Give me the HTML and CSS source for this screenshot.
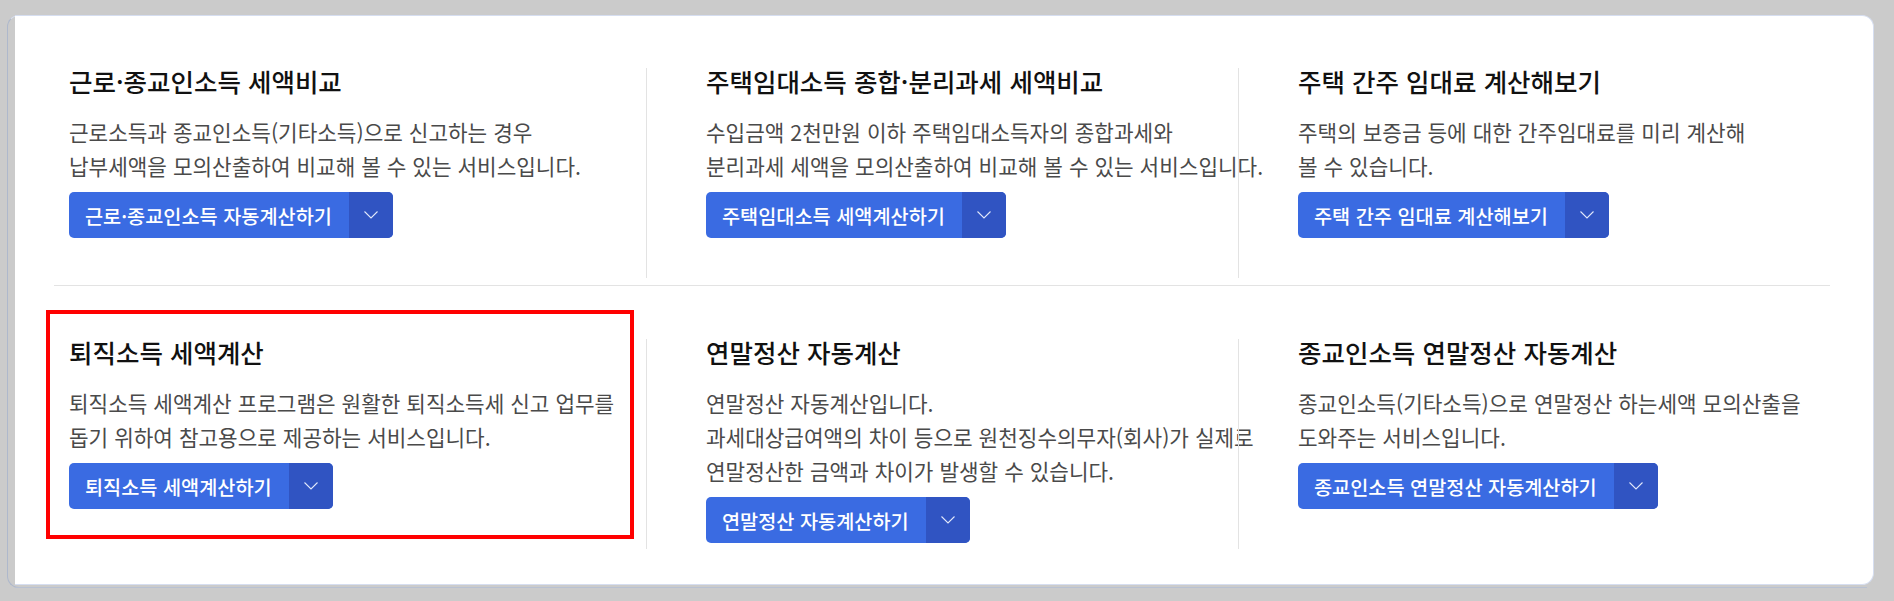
FILE: index.html
```html
<!DOCTYPE html>
<html lang="ko">
<head>
<meta charset="utf-8">
<title>세액계산 서비스</title>
<link rel="stylesheet" href="styles.css">
</head>
<body>
<div class="card">
  <div class="row row-first">
    <div class="item">
      <h3 class="title">근로·종교인소득 세액비교</h3>
      <p class="desc">근로소득과 종교인소득(기타소득)으로 신고하는 경우<br>납부세액을 모의산출하여 비교해 볼 수 있는 서비스입니다.</p>
      <div class="btn"><span class="btn-label">근로·종교인소득 자동계산하기</span><span class="btn-drop"><svg width="14" height="8" viewBox="0 0 14 8"><path d="M0.5 0.5 L7 7 L13.5 0.5" fill="none" stroke="#dfe6fa" stroke-width="1.1"/></svg></span></div>
    </div>
    <div class="item">
      <h3 class="title">주택임대소득 종합·분리과세 세액비교</h3>
      <p class="desc">수입금액 2천만원 이하 주택임대소득자의 종합과세와<br>분리과세 세액을 모의산출하여 비교해 볼 수 있는 서비스입니다.</p>
      <div class="btn"><span class="btn-label">주택임대소득 세액계산하기</span><span class="btn-drop"><svg width="14" height="8" viewBox="0 0 14 8"><path d="M0.5 0.5 L7 7 L13.5 0.5" fill="none" stroke="#dfe6fa" stroke-width="1.1"/></svg></span></div>
    </div>
    <div class="item">
      <h3 class="title">주택 간주 임대료 계산해보기</h3>
      <p class="desc">주택의 보증금 등에 대한 간주임대료를 미리 계산해<br>볼 수 있습니다.</p>
      <div class="btn"><span class="btn-label">주택 간주 임대료 계산해보기</span><span class="btn-drop"><svg width="14" height="8" viewBox="0 0 14 8"><path d="M0.5 0.5 L7 7 L13.5 0.5" fill="none" stroke="#dfe6fa" stroke-width="1.1"/></svg></span></div>
    </div>
  </div>
  <div class="row row-second">
    <div class="item highlighted">
      <h3 class="title">퇴직소득 세액계산</h3>
      <p class="desc">퇴직소득 세액계산 프로그램은 원활한 퇴직소득세 신고 업무를<br>돕기 위하여 참고용으로 제공하는 서비스입니다.</p>
      <div class="btn"><span class="btn-label">퇴직소득 세액계산하기</span><span class="btn-drop"><svg width="14" height="8" viewBox="0 0 14 8"><path d="M0.5 0.5 L7 7 L13.5 0.5" fill="none" stroke="#dfe6fa" stroke-width="1.1"/></svg></span></div>
    </div>
    <div class="item">
      <h3 class="title">연말정산 자동계산</h3>
      <p class="desc">연말정산 자동계산입니다.<br>과세대상급여액의 차이 등으로 원천징수의무자(회사)가 실제로<br>연말정산한 금액과 차이가 발생할 수 있습니다.</p>
      <div class="btn"><span class="btn-label">연말정산 자동계산하기</span><span class="btn-drop"><svg width="14" height="8" viewBox="0 0 14 8"><path d="M0.5 0.5 L7 7 L13.5 0.5" fill="none" stroke="#dfe6fa" stroke-width="1.1"/></svg></span></div>
    </div>
    <div class="item">
      <h3 class="title">종교인소득 연말정산 자동계산</h3>
      <p class="desc">종교인소득(기타소득)으로 연말정산 하는세액 모의산출을<br>도와주는 서비스입니다.</p>
      <div class="btn"><span class="btn-label">종교인소득 연말정산 자동계산하기</span><span class="btn-drop"><svg width="14" height="8" viewBox="0 0 14 8"><path d="M0.5 0.5 L7 7 L13.5 0.5" fill="none" stroke="#dfe6fa" stroke-width="1.1"/></svg></span></div>
    </div>
  </div>
</div>
</body>
</html>
```
FILE: styles.css
```css
html, body {
  margin: 0;
  padding: 0;
}
body {
  background: #cbcbcb;
  font-family: "Noto Sans CJK KR", "Noto Sans", sans-serif;
  height: 601px;
  overflow: hidden;
}
.card {
  position: relative;
  margin: 15px 20px 0 15px;
  background: #ffffff;
  border: 1px solid #d6def0;
  border-left: none;
  border-radius: 0 12px 12px 0;
  padding: 52px 43px 37px 39px;
  height: 570px;
  box-sizing: border-box;
}
.card::before {
  content: "";
  position: absolute;
  left: -8px;
  top: -1px;
  bottom: -4px;
  width: 40px;
  border: 1px solid #aeb8cc;
  border-right: none;
  border-top-color: #d6def0;
  border-radius: 12px 0 0 12px;
  z-index: -1;
}
.card::after {
  content: "";
  position: absolute;
  left: 0;
  bottom: -4px;
  right: 6px;
  height: 0;
  border-bottom: 1px solid #b8c1d2;
  z-index: -1;
}
.row {
  display: grid;
  grid-template-columns: repeat(3, minmax(0, 1fr));
}
.row-first {
  padding-bottom: 7px;
  border-bottom: 1px solid #e3e3e3;
}
.row-second {
  padding-top: 53px;
}
.item {
  position: relative;
  min-height: 210px;
  padding-left: 15px;
  box-sizing: border-box;
}
.item + .item {
  border-left: 1px solid #e3e3e3;
  padding-left: 59px;
}
.highlighted::after {
  content: "";
  position: absolute;
  left: -8px;
  top: -29px;
  right: 12px;
  bottom: 10px;
  border: 4px solid #ff0000;
}
.title {
  margin: 0;
  font-size: 25.5px;
  line-height: 26px;
  font-weight: 500;
  color: #111111;
  white-space: nowrap;
}
.desc {
  margin: 21px 0 9px;
  font-size: 21.3px;
  line-height: 34px;
  color: #4a4a4a;
  white-space: nowrap;
}
.btn {
  display: inline-flex;
  height: 46px;
  border-radius: 5px;
  overflow: hidden;
  background: #3a6be2;
}
.btn-label {
  display: flex;
  align-items: center;
  padding: 0 17px 0 16px;
  font-size: 19.7px;
  font-weight: 500;
  color: #ffffff;
  white-space: nowrap;
}
.btn-drop {
  display: flex;
  align-items: center;
  justify-content: center;
  width: 44px;
  background: #3054c2;
}
```
